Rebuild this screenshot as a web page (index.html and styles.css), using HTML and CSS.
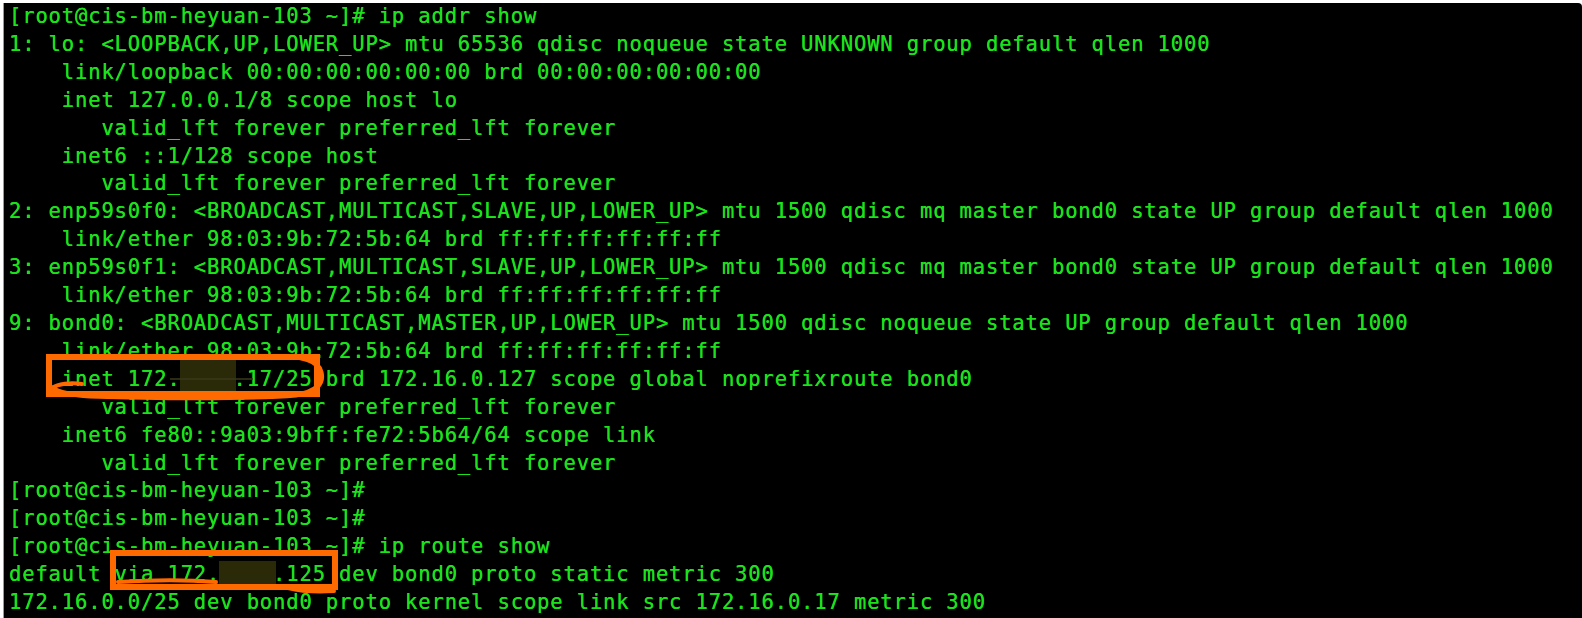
FILE: index.html
```html
<!DOCTYPE html>
<html>
<head>
<meta charset="utf-8">
<link rel="stylesheet" href="styles.css">
</head>
<body>
<div class="term">
<pre class="out">[root@cis-bm-heyuan-103 ~]# ip addr show
1: lo: &lt;LOOPBACK,UP,LOWER_UP&gt; mtu 65536 qdisc noqueue state UNKNOWN group default qlen 1000
    link/loopback 00:00:00:00:00:00 brd 00:00:00:00:00:00
    inet 127.0.0.1/8 scope host lo
       valid_lft forever preferred_lft forever
    inet6 ::1/128 scope host
       valid_lft forever preferred_lft forever
2: enp59s0f0: &lt;BROADCAST,MULTICAST,SLAVE,UP,LOWER_UP&gt; mtu 1500 qdisc mq master bond0 state UP group default qlen 1000
    link/ether 98:03:9b:72:5b:64 brd ff:ff:ff:ff:ff:ff
3: enp59s0f1: &lt;BROADCAST,MULTICAST,SLAVE,UP,LOWER_UP&gt; mtu 1500 qdisc mq master bond0 state UP group default qlen 1000
    link/ether 98:03:9b:72:5b:64 brd ff:ff:ff:ff:ff:ff
9: bond0: &lt;BROADCAST,MULTICAST,MASTER,UP,LOWER_UP&gt; mtu 1500 qdisc noqueue state UP group default qlen 1000
    link/ether 98:03:9b:72:5b:64 brd ff:ff:ff:ff:ff:ff
    inet 172.<span class="redact big">    </span>.17/25 brd 172.16.0.127 scope global noprefixroute bond0
       valid_lft forever preferred_lft forever
    inet6 fe80::9a03:9bff:fe72:5b64/64 scope link
       valid_lft forever preferred_lft forever
[root@cis-bm-heyuan-103 ~]#
[root@cis-bm-heyuan-103 ~]#
[root@cis-bm-heyuan-103 ~]# ip route show
default via 172.<span class="redact small">    </span>.125 dev bond0 proto static metric 300
172.16.0.0/25 dev bond0 proto kernel scope link src 172.16.0.17 metric 300</pre>
<svg class="marks" width="1582" height="618" viewBox="0 0 1582 618">
  <line x1="170" y1="379" x2="253" y2="379" stroke="#3a3a1a" stroke-width="1.5"/>
  <rect x="49" y="357" width="268" height="37" fill="none" stroke="#ff6a00" stroke-width="6"/>
  <path d="M286 357 C300 356 318 360 321 372 C324 384 316 392 296 395 C250 399 150 398 90 396 C70 395 58 392 52 388" fill="none" stroke="#ff6a00" stroke-width="5" stroke-linecap="round"/>
  <path d="M52 388 C58 384 70 382 82 384" fill="none" stroke="#ff6a00" stroke-width="4" stroke-linecap="round"/>
  <rect x="113" y="553" width="222" height="34" fill="none" stroke="#ff6a00" stroke-width="6"/>
  <path d="M118 582 C150 580 190 580 216 582" fill="none" stroke="#ff6a00" stroke-width="4" stroke-linecap="round"/>
  <path d="M288 588 C300 591 318 592 334 591" fill="none" stroke="#ff6a00" stroke-width="4" stroke-linecap="round"/>
</svg>
</div>
</body>
</html>
```
FILE: styles.css
```css
html, body {
  margin: 0;
  padding: 0;
  background: #ffffff;
  overflow: hidden;
}
.term {
  position: relative;
  margin: 3px 0 0 3px;
  height: 615px;
  background: #000000;
  border-left: 1px solid #9a9a9a;
  border-top-right-radius: 4px;
  overflow: hidden;
}
.out {
  margin: 0;
  padding: 0 0 0 5px;
  font-family: "DejaVu Sans Mono", monospace;
  font-size: 20.5px;
  letter-spacing: 0.86px;
  line-height: 27.9px;
  color: #1ce21c;
  text-shadow: 0 0 0.4px #1ce21c;
}
.redact {
  position: relative;
}
.redact::after {
  content: "";
  position: absolute;
  left: -1px;
  right: -3px;
  background: #2a2a08;
}
.redact.big::after {
  top: -7px;
  bottom: -6px;
}
.redact.small::after {
  top: -1px;
  bottom: -1px;
}
.marks {
  position: absolute;
  left: -4px;
  top: -3px;
  pointer-events: none;
}
```
